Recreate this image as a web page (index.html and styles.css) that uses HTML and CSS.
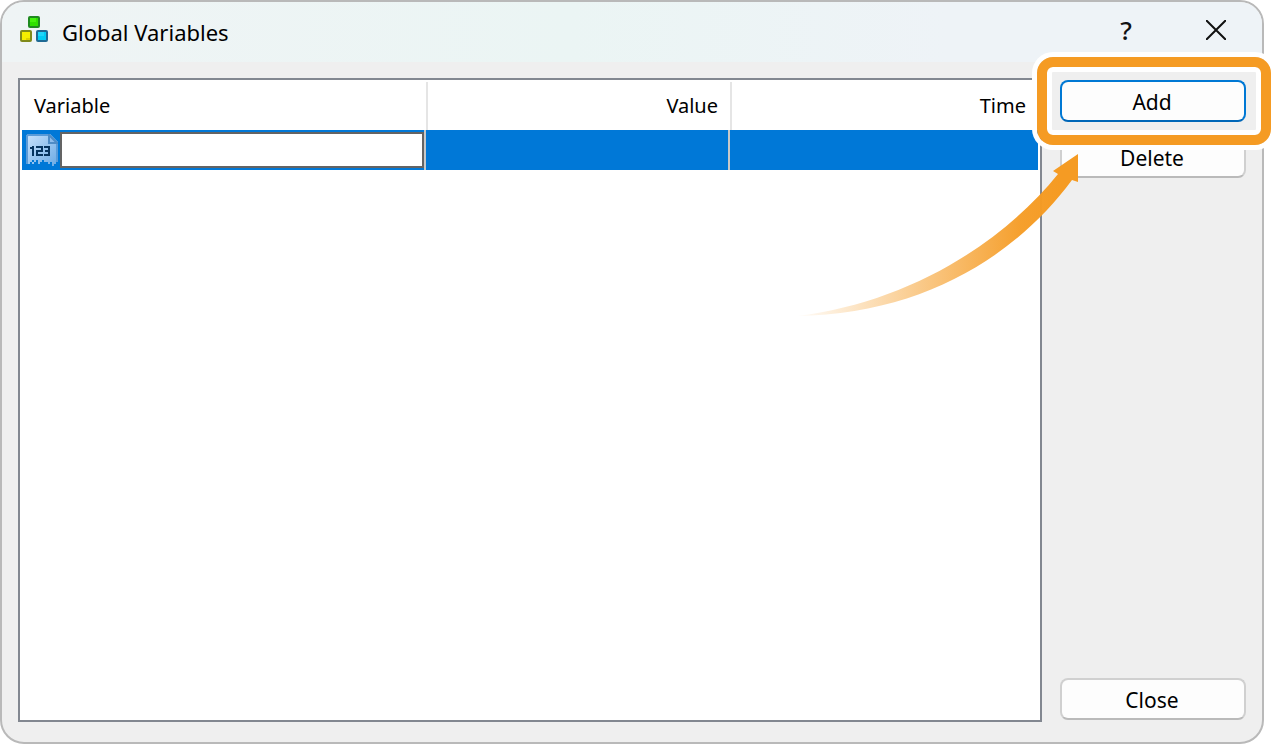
FILE: index.html
```html
<!DOCTYPE html>
<html lang="en">
<head>
<meta charset="utf-8">
<title>Global Variables</title>
<link rel="stylesheet" href="styles.css">
</head>
<body>
<main class="dialog" role="dialog" aria-labelledby="dialog-title">
  <header class="titlebar">
    <svg class="app-icon" viewBox="0 0 28 26" aria-hidden="true">
      <rect fill="#1f8a1f" x="8" width="12" height="12" rx="2"/><path fill="#2fe000" d="M10 2h8v8h-8z"/><path fill="#45f20c" d="M10 2h6v4h-6z"/>
      <rect fill="#7f8a1a" y="14" width="12" height="12" rx="2"/><path fill="#f4ee00" d="M2 16h8v8H2z"/><path fill="#dcd000" d="M6 22h4v2H6z"/>
      <rect fill="#1f6a94" x="16" y="14" width="12" height="12" rx="2"/><path fill="#00ccf4" d="M18 16h8v8h-8z"/><path fill="#1fd6fa" d="M18 16h6v4h-6z"/>
    </svg>
    <h1 class="title" id="dialog-title">Global Variables</h1>
    <button class="title-button help" type="button" aria-label="Help">?</button>
    <button class="title-button" type="button" aria-label="Close window">
      <svg class="close-icon" viewBox="0 0 20 20" aria-hidden="true"><path d="M0 0l20 20M20 0L0 20"/></svg>
    </button>
  </header>
  <div class="content">
    <section class="list">
      <table class="variables">
        <colgroup><col class="col-variable"><col class="col-value"><col></colgroup>
        <thead>
          <tr><th scope="col">Variable</th><th scope="col" class="right">Value</th><th scope="col" class="right">Time</th></tr>
        </thead>
        <tbody>
          <tr>
            <td>
              <div class="name-cell">
                <svg class="file-icon" viewBox="0 0 32 32" aria-hidden="true">
                  <defs><linearGradient id="paper" x1="0" y1="0" x2="1" y2="1"><stop offset="0" stop-color="#c8e2fc"/><stop offset="1" stop-color="#6aa9e4"/></linearGradient></defs>
                  <path fill="url(#paper)" d="M2 0h22l8 8v20h-2v2h-2v2h-2v-4h-2v2h-2v-2h-4v-2h-2v2h-2v2h-2v-4h-2v2h-2v2h-2v-2H8v-2H6v2H4v2H0V2z"/>
                  <path fill="none" stroke="#5a9bd8" stroke-width="2" d="M1 30V2L2 1h21l8 8v19"/>
                  <path fill="#8ebdec" stroke="#4f8cc6" stroke-width="2" d="M23 1v8h8z"/>
                  <g fill="none" stroke="#06345f" stroke-width="2" shape-rendering="crispEdges">
                    <path d="M4 14h2M7 12v10M10 13h6v4h-5v4h6M18 13h5v8h-5M19 17h4"/>
                  </g>
                </svg>
                <input class="name-input" type="text" aria-label="Variable name">
              </div>
            </td>
            <td></td>
            <td></td>
          </tr>
        </tbody>
      </table>
    </section>
    <aside class="actions">
      <div class="callout">
        <button class="button primary" type="button">Add</button>
        <span class="highlight"></span>
        <svg class="arrow" viewBox="796 154 284 164" aria-hidden="true">
          <defs><linearGradient id="fade" gradientUnits="userSpaceOnUse" x1="792" y1="0" x2="1060" y2="0"><stop offset="0" stop-color="#f59b23" stop-opacity="0"/><stop offset=".85" stop-color="#f59b23" stop-opacity=".95"/><stop offset="1" stop-color="#f59b23"/></linearGradient></defs>
          <path fill="url(#fade)" d="M797 316C905 303 1000 246 1058 174L1053 171L1078 154V182L1072 180C1015 257 922 314 797 316z"/>
        </svg>
      </div>
      <button class="button" type="button">Delete</button>
      <button class="button last" type="button">Close</button>
    </aside>
  </div>
</main>
</body>
</html>
```
FILE: styles.css
```css
* {
  box-sizing: border-box;
}

body {
  margin: 0;
  padding-right: 12px;
  background: #fff;
  color: #000;
  font: 20px/28px "Noto Sans", "Open Sans", sans-serif;
}

.dialog {
  display: flex;
  flex-direction: column;
  min-height: 100vh;
  border: 2px solid #b9b9b9;
  border-radius: 24px;
  background: #efefef;
}

.titlebar {
  display: flex;
  align-items: center;
  height: 60px;
  padding: 0 18px;
  border-radius: 22px 22px 0 0;
  background: linear-gradient(90deg, #eff4f5, #ebf5f4 45%, #eef3f7 75%);
}

.app-icon {
  width: 28px;
  height: 26px;
  margin-bottom: 6px;
}

.title {
  flex: 1;
  margin: 0 0 0 14px;
  font-size: 22px;
  font-weight: 400;
}

.title-button {
  display: flex;
  align-items: center;
  justify-content: center;
  width: 56px;
  height: 40px;
  margin: 0 0 4px 34px;
  padding: 0;
  border: 0;
  background: none;
  color: #111;
  font: inherit;
}

.help {
  font-size: 26px;
  font-weight: 500;
}

.close-icon {
  width: 20px;
  height: 20px;
  fill: none;
  stroke: #111;
  stroke-width: 2;
}

.content {
  display: flex;
  flex: 1;
  gap: 18px;
  padding: 16px 16px 20px;
}

.list {
  flex: 1;
  padding: 2px;
  border: 2px solid #828790;
  background: #fff;
}

.variables {
  width: 100%;
  table-layout: fixed;
  border-collapse: separate;
  border-spacing: 0;
}

.col-variable {
  width: 404px;
}

.col-value {
  width: 304px;
}

.variables th {
  height: 48px;
  padding: 0 12px;
  font-weight: 400;
  text-align: left;
}

.variables th.right {
  border-left: 2px solid #e5e5e5;
  text-align: right;
}

.variables td {
  height: 40px;
  padding: 0;
  background: #0078d7;
}

.variables td:not(:last-child) {
  border-right: 2px solid #c8c8c8;
}

.name-cell {
  display: flex;
  align-items: center;
  gap: 2px;
  padding-left: 4px;
}

.file-icon {
  flex: none;
  width: 32px;
  height: 32px;
}

.name-input {
  flex: 1;
  min-width: 0;
  height: 36px;
  padding: 0 4px;
  border: 2px solid #646464;
  outline: 0;
  background: #fff;
  font: inherit;
}

.actions {
  display: flex;
  flex-direction: column;
  gap: 14px;
  width: 186px;
  padding-top: 2px;
}

.button {
  width: 100%;
  height: 42px;
  padding: 2px 2px 0 0;
  border: 2px solid #d0d0d0;
  border-bottom-color: #bababa;
  border-radius: 8px;
  background: #fdfdfd;
  color: #000;
  font: inherit;
  font-size: 21px;
}

.primary {
  border-color: #0078d4;
  border-bottom-color: #0067b8;
}

.last {
  margin-top: auto;
  margin-bottom: 2px;
}

.callout {
  position: relative;
  display: flex;
  z-index: 1;
}

.highlight {
  position: absolute;
  inset: -23px -25px -23px -23px;
  border: 10px solid #f59b23;
  border-radius: 16px;
  box-shadow: 0 0 0 5px #fff, inset 0 0 0 5px #fff;
  pointer-events: none;
}

.arrow {
  position: absolute;
  top: 74px;
  left: -264px;
  width: 284px;
  height: 164px;
  pointer-events: none;
}
```
